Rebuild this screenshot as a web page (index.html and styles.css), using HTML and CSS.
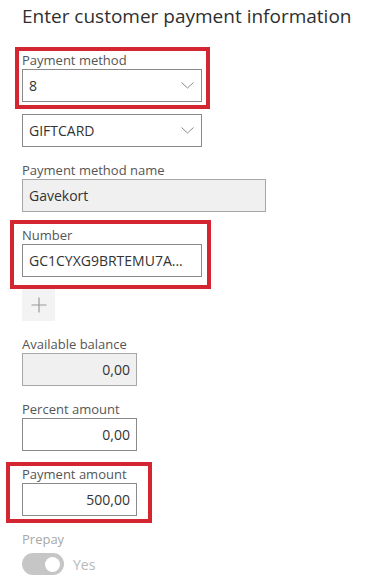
FILE: index.html
```html
<!DOCTYPE html>
<html lang="en">
<head>
    <meta charset="UTF-8">
    <meta name="viewport" content="width=device-width, initial-scale=1.0">
    <title>Enter customer payment information</title>
    <link rel="stylesheet" href="styles.css">
</head>
<body>

    <h1 class="title">Enter customer payment information</h1>

    <div class="form">
        <div class="field">
            <div class="label">Payment method</div>
            <div class="input select">
                <span>8</span>
                <svg class="chevron" width="13" height="7" viewBox="0 0 13 7"><path d="M0.5 0.5 L6.5 6 L12.5 0.5" fill="none" stroke="#8a8a8a" stroke-width="1"/></svg>
            </div>
            <div class="mark mark-method"></div>
        </div>

        <div class="input select tight">
            <span>GIFTCARD</span>
            <svg class="chevron" width="13" height="7" viewBox="0 0 13 7"><path d="M0.5 0.5 L6.5 6 L12.5 0.5" fill="none" stroke="#8a8a8a" stroke-width="1"/></svg>
        </div>

        <div class="field">
            <div class="label">Payment method name</div>
            <div class="input readonly wide">Gavekort</div>
        </div>

        <div class="field">
            <div class="label">Number</div>
            <div class="input">GC1CYXG9BRTEMU7A...</div>
            <div class="mark mark-number"></div>
        </div>

        <button class="add-button tight">
            <svg width="16" height="16" viewBox="0 0 16 16"><path d="M8 0.5 V15.5 M0.5 8 H15.5" stroke="#9a9a9a" stroke-width="1.2"/></svg>
        </button>

        <div class="field">
            <div class="label">Available balance</div>
            <div class="input readonly amount">0,00</div>
        </div>

        <div class="field">
            <div class="label">Percent amount</div>
            <div class="input amount">0,00</div>
        </div>

        <div class="field">
            <div class="label">Payment amount</div>
            <div class="input amount">500,00</div>
            <div class="mark mark-amount"></div>
        </div>

        <div class="field disabled">
            <div class="label">Prepay</div>
            <div class="toggle-row">
                <div class="toggle"><div class="knob"></div></div>
                <span class="toggle-text">Yes</span>
            </div>
        </div>
    </div>

</body>
</html>
```

FILE: styles.css
```css
* {
    margin: 0;
    padding: 0;
    box-sizing: border-box;
}

body {
    font-family: 'Open Sans', 'Noto Sans', sans-serif;
    background-color: #ffffff;
    color: #333333;
    padding: 3px 0 0 22px;
}

.title {
    font-size: 19px;
    font-weight: normal;
    line-height: 26px;
    color: #2f2f2f;
    margin-bottom: 23px;
}

.form {
    display: flex;
    flex-direction: column;
    align-items: flex-start;
    gap: 15px;
}

.field {
    position: relative;
}

.label {
    font-size: 13px;
    line-height: 17px;
    color: #555555;
}

.input {
    width: 180px;
    height: 33px;
    border: 1px solid #8a8a8a;
    background-color: #ffffff;
    font-size: 14px;
    line-height: 31px;
    padding: 0 6px;
    color: #333333;
    display: flex;
    align-items: center;
    white-space: nowrap;
}

.select {
    justify-content: space-between;
    padding-right: 7px;
}

.chevron {
    display: block;
}

.tight {
    margin-top: -3px;
}

.wide {
    width: 244px;
}

.readonly {
    background-color: #f0f0f0;
    border-color: #a6a6a6;
}

.amount {
    width: 115px;
    justify-content: flex-end;
}

.add-button {
    width: 33px;
    height: 32px;
    border: none;
    background-color: #f3f3f3;
    display: flex;
    align-items: center;
    justify-content: center;
    cursor: pointer;
}

.disabled .label {
    color: #a8a8a8;
}

.toggle-row {
    display: flex;
    align-items: center;
    gap: 9px;
    margin-top: 5px;
}

.toggle {
    width: 42px;
    height: 22px;
    border-radius: 11px;
    background-color: #c6c6c6;
    display: flex;
    align-items: center;
    justify-content: flex-end;
    padding-right: 4px;
}

.knob {
    width: 15px;
    height: 15px;
    border-radius: 50%;
    background-color: #ffffff;
}

.toggle-text {
    font-size: 14px;
    color: #b8b8b8;
}

/* red annotation frames drawn over the fields */
.mark {
    position: absolute;
    border: 4px solid #d42631;
    pointer-events: none;
}

.mark-method {
    left: -7px;
    top: -5px;
    right: -8px;
    bottom: -7px;
}

.mark-number {
    left: -12px;
    top: -7px;
    right: -9px;
    bottom: -12px;
}

.mark-amount {
    left: -16px;
    top: -4px;
    right: -15px;
    bottom: -7px;
}
```
